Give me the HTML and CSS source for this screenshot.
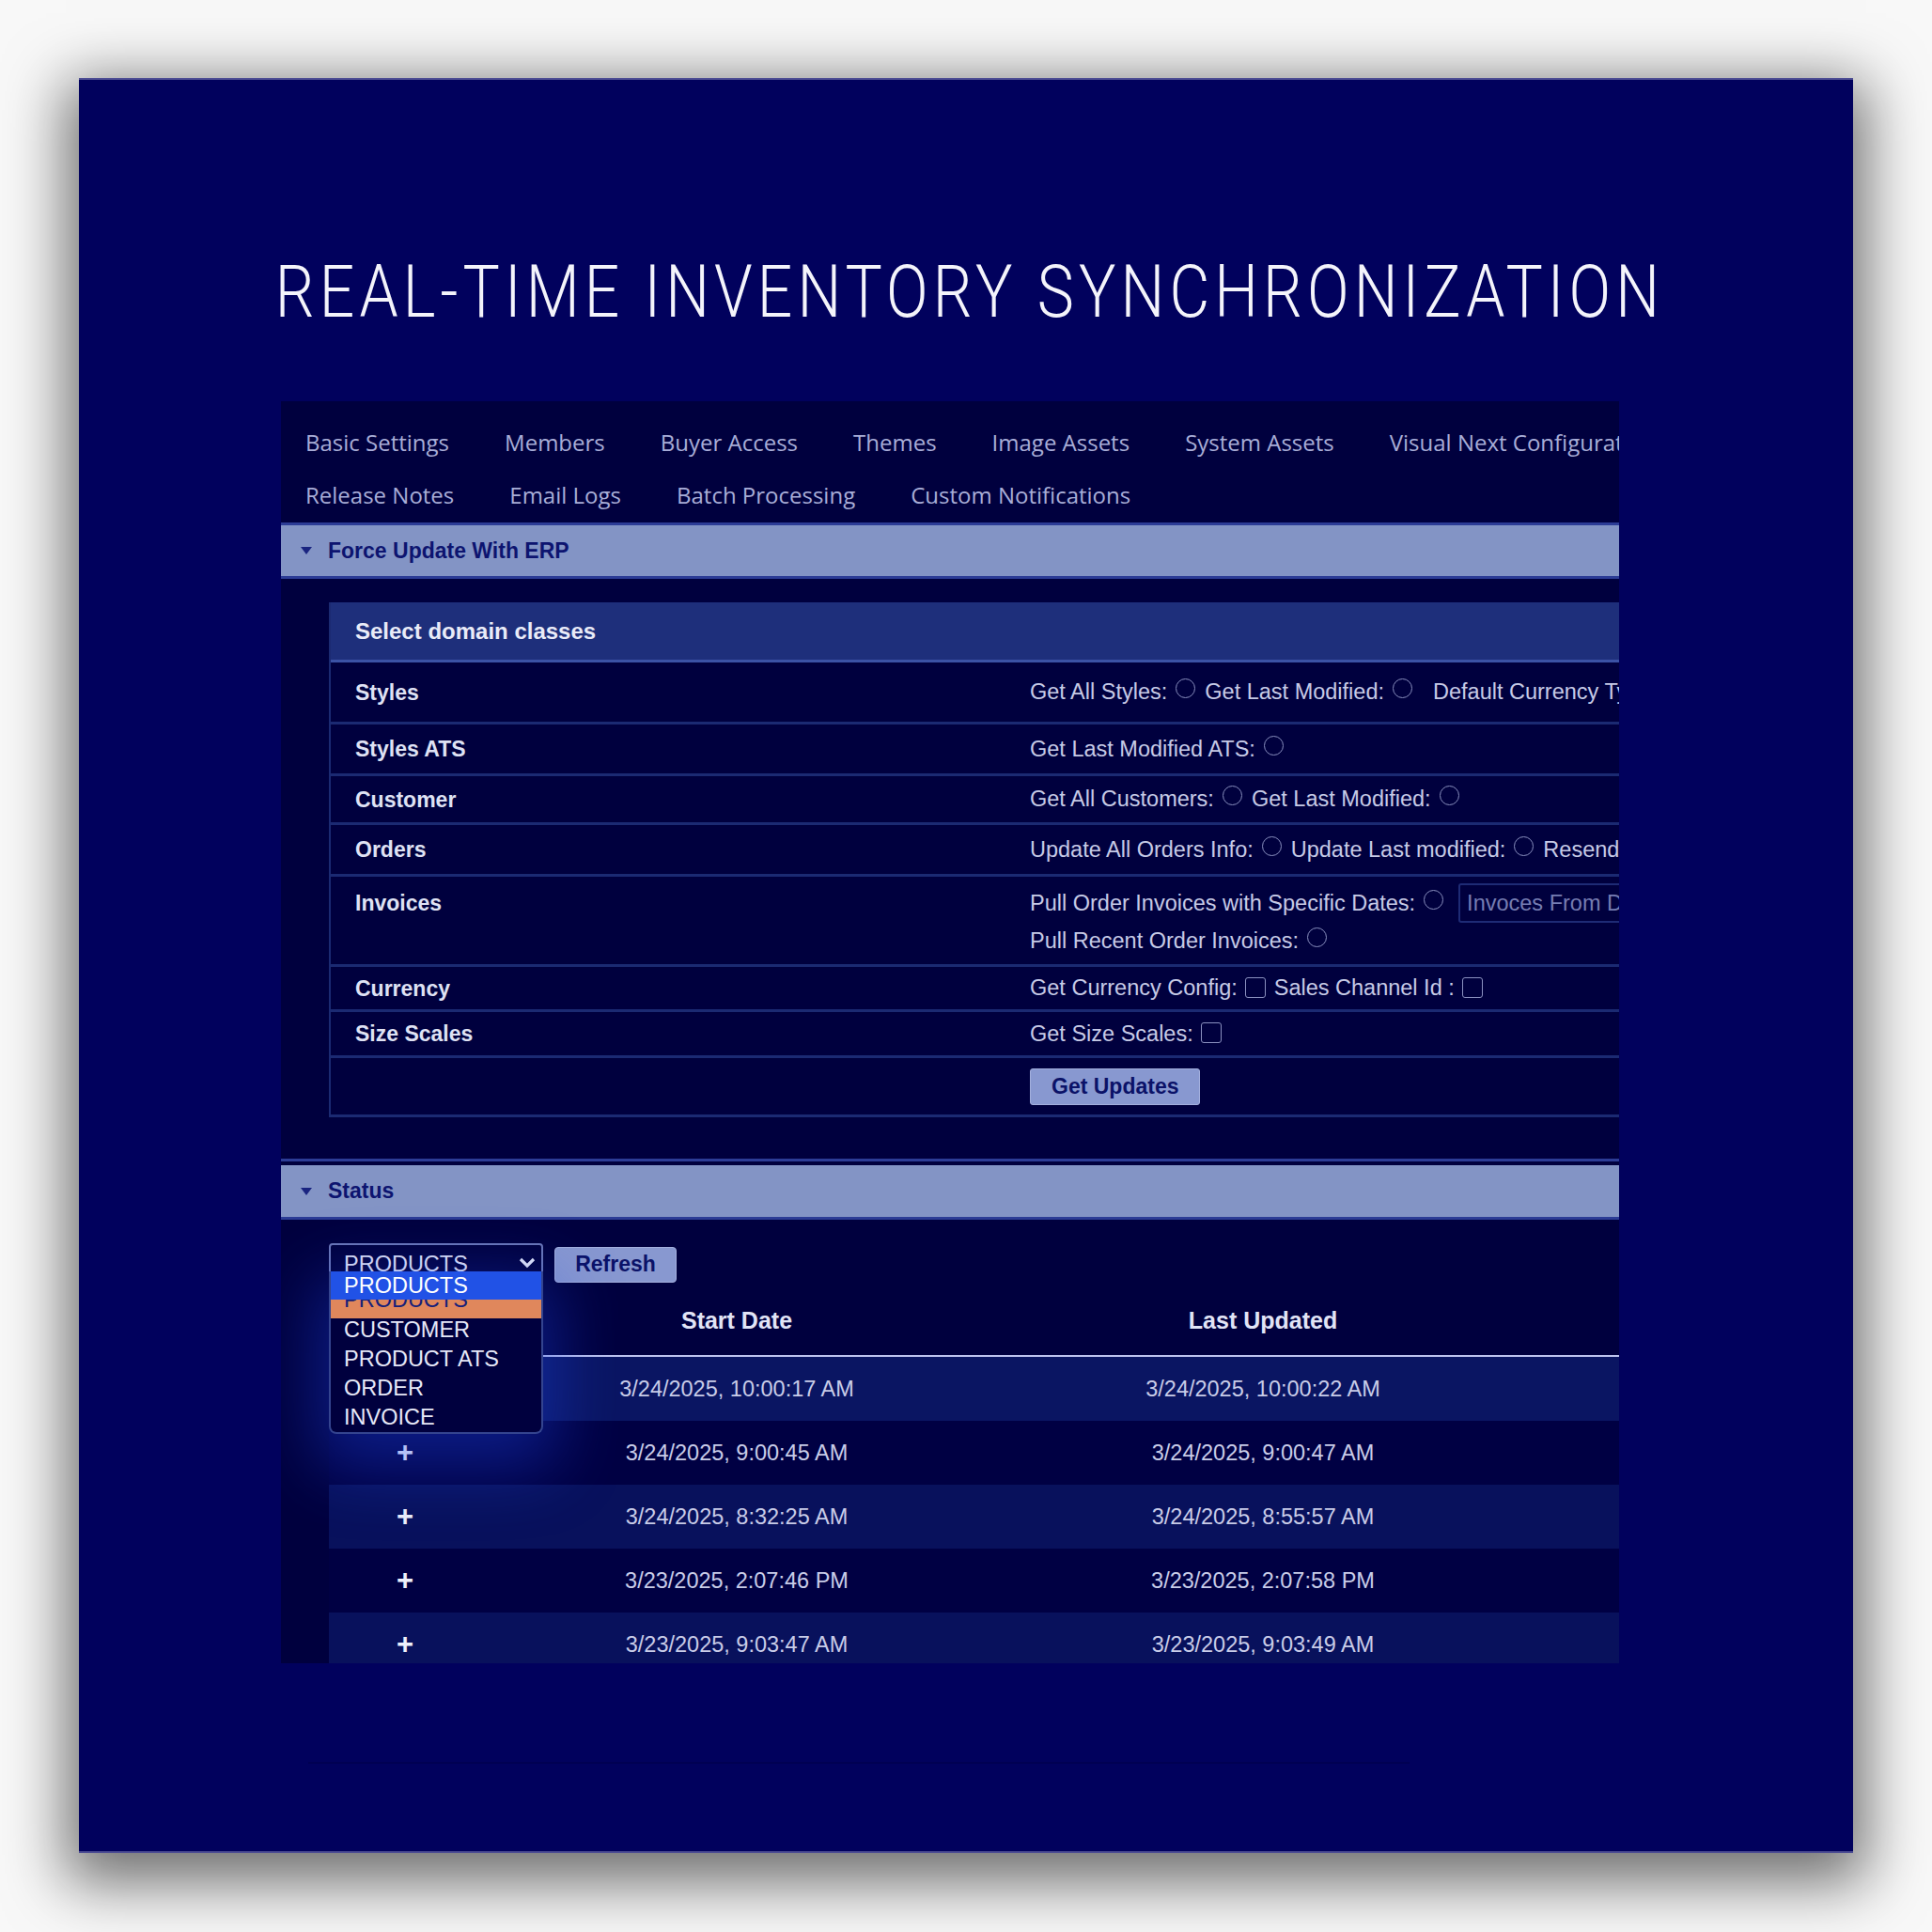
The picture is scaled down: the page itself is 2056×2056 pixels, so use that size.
FILE: index.html
```html
<!DOCTYPE html>
<html lang="en">
<head>
<meta charset="utf-8">
<title>Real-Time Inventory Synchronization</title>
<link rel="stylesheet" href="styles.css">
</head>
<body>
<div class="page">
  <div class="panel">
    <h1 class="title">REAL-TIME INVENTORY SYNCHRONIZATION</h1>
    <div class="app">
      <nav class="tabs">
        <div class="tab-row">
          <span>Basic Settings</span><span>Members</span><span>Buyer Access</span><span>Themes</span><span>Image Assets</span><span>System Assets</span><span>Visual Next Configuration</span>
        </div>
        <div class="tab-row">
          <span>Release Notes</span><span>Email Logs</span><span>Batch Processing</span><span>Custom Notifications</span>
        </div>
      </nav>

      <section class="sec">
        <div class="sec-head"><span class="caret"></span>Force Update With ERP</div>
        <div class="sec-body">
          <div class="domain">
            <div class="band">Select domain classes</div>
            <div class="drow h66">
              <div class="lbl">Styles</div>
              <div class="val"><span>Get All Styles:</span><i class="rad"></i><span>Get Last Modified:</span><i class="rad"></i><span class="far">Default Currency Type</span></div>
            </div>
            <div class="drow h55">
              <div class="lbl">Styles ATS</div>
              <div class="val"><span>Get Last Modified ATS:</span><i class="rad"></i></div>
            </div>
            <div class="drow h52">
              <div class="lbl">Customer</div>
              <div class="val"><span>Get All Customers:</span><i class="rad"></i><span>Get Last Modified:</span><i class="rad"></i></div>
            </div>
            <div class="drow h55">
              <div class="lbl">Orders</div>
              <div class="val"><span>Update All Orders Info:</span><i class="rad"></i><span>Update Last modified:</span><i class="rad"></i><span>Resend Orders</span></div>
            </div>
            <div class="drow inv">
              <div class="lbl">Invoices</div>
              <div class="vcol">
                <div class="val line"><span>Pull Order Invoices with Specific Dates:</span><i class="rad"></i><input class="date" type="text" placeholder="Invoces From Date"></div>
                <div class="val line"><span>Pull Recent Order Invoices:</span><i class="rad"></i></div>
              </div>
            </div>
            <div class="drow h48">
              <div class="lbl">Currency</div>
              <div class="val"><span>Get Currency Config:</span><i class="chk"></i><span>Sales Channel Id :</span><i class="chk"></i></div>
            </div>
            <div class="drow h49">
              <div class="lbl">Size Scales</div>
              <div class="val"><span>Get Size Scales:</span><i class="chk"></i></div>
            </div>
            <div class="drow h63">
              <div class="lbl"></div>
              <div class="val"><button class="btn" type="button">Get Updates</button></div>
            </div>
          </div>
        </div>
      </section>

      <div class="rule"></div>

      <section class="sec">
        <div class="sec-head status-head"><span class="caret"></span>Status</div>
        <div class="status-body">
          <div class="controls">
            <div class="select">
              PRODUCTS
              <svg class="chev" width="20" height="13" viewBox="0 0 20 13"><polyline points="3,3 10,10 17,3" fill="none" stroke="#e6e8f8" stroke-width="3.2"/></svg>
              <div class="dropdown">
                <div class="opt hover">PRODUCTS</div>
                <div class="opt sel"><span>PRODUCTS</span></div>
                <div class="opts">
                  <div class="opt">CUSTOMER</div>
                  <div class="opt">PRODUCT ATS</div>
                  <div class="opt">ORDER</div>
                  <div class="opt">INVOICE</div>
                </div>
              </div>
            </div>
            <button class="btn refresh" type="button">Refresh</button>
          </div>
          <div class="table">
            <div class="thead">
              <div></div><div>Start Date</div><div>Last Updated</div><div></div>
            </div>
            <div class="trow lt first">
              <div class="plus">+</div><div>3/24/2025, 10:00:17 AM</div><div>3/24/2025, 10:00:22 AM</div><div></div>
            </div>
            <div class="trow dk">
              <div class="plus">+</div><div>3/24/2025, 9:00:45 AM</div><div>3/24/2025, 9:00:47 AM</div><div></div>
            </div>
            <div class="trow lt">
              <div class="plus">+</div><div>3/24/2025, 8:32:25 AM</div><div>3/24/2025, 8:55:57 AM</div><div></div>
            </div>
            <div class="trow dk">
              <div class="plus">+</div><div>3/23/2025, 2:07:46 PM</div><div>3/23/2025, 2:07:58 PM</div><div></div>
            </div>
            <div class="trow lt">
              <div class="plus">+</div><div>3/23/2025, 9:03:47 AM</div><div>3/23/2025, 9:03:49 AM</div><div></div>
            </div>
          </div>
        </div>
      </section>
    </div>
    <div class="faint"></div>
  </div>
</div>
</body>
</html>
```
FILE: styles.css
```css
* { box-sizing: border-box; }

body {
  margin: 0;
  width: 2056px;
  height: 2056px;
  overflow: hidden;
  background: #f8f8f8;
}

.page { padding: 83px 0 0 84px; }

.panel {
  width: 1888px;
  height: 1889px;
  background: #01015d;
  border-top: 2px solid #4d4d93;
  border-bottom: 2px solid #4d4d93;
  box-shadow: 0 18px 60px 14px rgba(0, 0, 0, 0.55);
  padding-top: 190px;
}

.title {
  margin: 0 0 80px;
  height: 72px;
  line-height: 72px;
  text-align: center;
  white-space: nowrap;
  font-family: Roboto, "Open Sans", sans-serif;
  font-weight: 300;
  font-size: 77px;
  letter-spacing: 6px;
  color: #f4f4fb;
  transform: translateX(4px) scaleX(0.855);
  transform-origin: 50% 50%;
}

.app {
  margin-left: 215px;
  width: 1424px;
  height: 1343px;
  overflow: hidden;
  background: #00003e;
  font-family: "Liberation Sans", Arial, sans-serif;
}

/* tabs */
.tabs {
  height: 129px;
  padding: 16px 0 0 26px;
  font-family: "Open Sans", sans-serif;
  font-size: 24px;
  color: #a8add7;
}
.tab-row {
  display: flex;
  gap: 59px;
  height: 56px;
  line-height: 56px;
  white-space: nowrap;
}

/* section headers */
.sec-head {
  height: 60px;
  border-top: 3px solid #2c3c96;
  border-bottom: 3px solid #2c3c96;
  background: #8394c5;
  display: flex;
  align-items: center;
  padding-left: 21px;
  color: #0d1470;
  font-weight: 700;
  font-size: 23px;
}
.status-head {
  height: 58px;
  border-top: none;
}
.caret {
  width: 0;
  height: 0;
  border-left: 6px solid transparent;
  border-right: 6px solid transparent;
  border-top: 8px solid #1a2480;
  margin-right: 17px;
}
.rule {
  height: 3px;
  background: #2c3c96;
  margin-bottom: 4px;
}

.sec-body { padding: 25px 0 44px 51px; }

/* domain classes box */
.domain {
  width: 1500px;
  border-left: 2px solid #1b2a72;
}
.band {
  height: 64px;
  background: #1e2f7b;
  border-bottom: 3px solid #3b52a6;
  display: flex;
  align-items: center;
  padding-left: 26px;
  font-weight: 700;
  font-size: 24px;
  color: #e9ebf8;
}
.drow {
  display: grid;
  grid-template-columns: 744px 1fr;
  align-items: center;
  border-bottom: 3px solid #1b2a72;
}
.h66 { height: 66px; }
.h55 { height: 55px; }
.h52 { height: 52px; }
.h48 { height: 48px; }
.h49 { height: 49px; }
.h63 { height: 63px; }
.drow.inv {
  height: 96px;
  align-items: start;
  padding-top: 8px;
}
.lbl {
  padding-left: 26px;
  font-weight: 700;
  font-size: 23px;
  line-height: 40px;
  color: #dfe2f4;
}
.val {
  display: flex;
  align-items: center;
  white-space: nowrap;
  font-size: 23.5px;
  color: #c6cae6;
}
.val.line { height: 40px; }
.far { margin-left: 12px; }

.rad {
  flex: none;
  width: 21px;
  height: 21px;
  border: 1.5px solid #8a90bf;
  border-radius: 50%;
  margin: 0 10px 8px 9px;
}
.chk {
  flex: none;
  width: 22px;
  height: 22px;
  border: 1.5px solid #8a90bf;
  border-radius: 3px;
  margin: 0 9px 2px 8px;
}
.date {
  width: 400px;
  height: 42px;
  margin-left: 6px;
  padding: 0 7px;
  background: transparent;
  border: 2px solid #1e2b75;
  border-radius: 3px;
  font-family: "Liberation Sans", Arial, sans-serif;
  font-size: 23.5px;
  color: #c6cae6;
}
.date::placeholder { color: #767db2; }

.btn {
  height: 39px;
  padding: 0 22px;
  background: #8898d0;
  border: 1px solid #a3afdd;
  border-radius: 3px;
  font-family: "Liberation Sans", Arial, sans-serif;
  font-weight: 700;
  font-size: 23px;
  color: #0b1268;
}

/* status */
.status-body { padding: 25px 0 0 51px; }
.controls {
  display: flex;
  align-items: center;
  height: 45px;
}
.select {
  position: relative;
  width: 228px;
  height: 45px;
  border: 2px solid #6a76b6;
  border-radius: 4px;
  padding-left: 14px;
  line-height: 41px;
  font-size: 23.5px;
  color: #e2e4f6;
  z-index: 2;
}
.chev {
  position: absolute;
  left: 199px;
  top: 12px;
}
.dropdown {
  position: absolute;
  top: 28px;
  left: -2px;
  width: 228px;
  background: #00003e;
  border: 2px solid #34448f;
  border-top: none;
  border-radius: 0 0 8px 8px;
  box-shadow: 0 22px 70px 14px rgba(30, 70, 235, 0.4);
  line-height: normal;
}
.opt {
  padding-left: 14px;
  font-size: 23.5px;
  color: #e6e8f8;
  height: 31px;
  line-height: 31px;
}
.opt.hover {
  height: 30px;
  line-height: 30px;
  background: #2152e6;
  color: #ffffff;
}
.opt.sel {
  height: 20px;
  overflow: hidden;
  background: #e0875c;
  color: #15207a;
}
.opt.sel span {
  display: block;
  line-height: 30px;
  margin-top: -15px;
}
.opts { margin-top: -3px; }

.refresh {
  margin-left: 12px;
  width: 130px;
  height: 38px;
  padding: 0;
  border-radius: 4px;
}

.table { width: 1373px; }
.thead,
.trow {
  display: grid;
  grid-template-columns: 162px 544px 576px 1fr;
  align-items: center;
  text-align: center;
}
.thead {
  height: 76px;
  border-bottom: 2px solid #bcc3ee;
  font-weight: 700;
  font-size: 25px;
  color: #e1e4f6;
}
.trow {
  height: 68px;
  font-size: 23.5px;
  color: #c8cce8;
}
.trow.lt { background: #08115c; }
.trow.dk { background: #000043; }
.trow.first { background: #0a1562; }
.plus {
  font-weight: 700;
  font-size: 31px;
  color: #eef0fb;
}

.faint {
  margin: 105px 0 0 244px;
  width: 1172px;
  height: 2px;
  background: #000052;
}
```
